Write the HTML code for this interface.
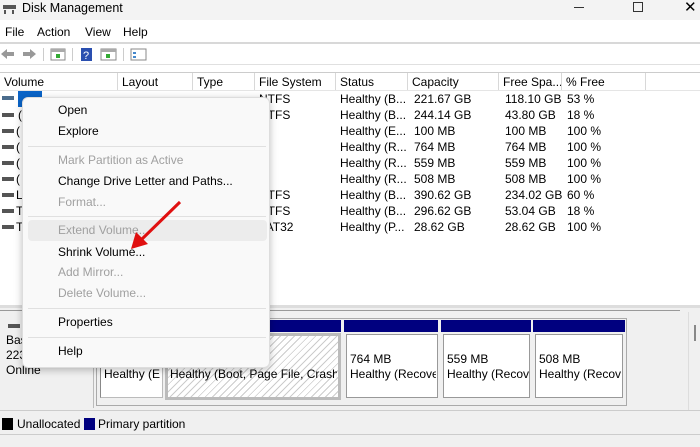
<!DOCTYPE html>
<html><head><style>
*{margin:0;padding:0;box-sizing:border-box}
body{width:700px;height:447px;overflow:hidden;background:#f0f0f0;font-family:"Liberation Sans",sans-serif;font-size:12px;color:#000;position:relative}
.a{position:absolute;white-space:nowrap}
.row{position:absolute;left:0;width:700px;height:16px}
.row span{position:absolute;top:1px;white-space:nowrap}
.mi{position:absolute;left:58px;font-size:12px}
.dis{color:#a0a0a0}
.sep{position:absolute;left:28px;width:238px;height:1px;background:#e0e0e0}
.hd{position:absolute;top:73px;height:18px;border-right:1px solid #d8d8d8;padding:2px 4px;font-size:12px;white-space:nowrap;overflow:hidden}
</style></head><body>
<div class="a" style="left:0;top:0;width:700px;height:20px;background:#f3f3f3"></div>
<svg class="a" style="left:3px;top:3px" width="14" height="12"><rect x="0" y="2" width="13" height="4" fill="#555"/><rect x="1" y="7" width="2" height="4" fill="#555"/><rect x="9" y="7" width="2" height="4" fill="#555"/></svg>
<div class="a" style="left:22px;top:1px;font-size:12.5px">Disk Management</div>
<div class="a" style="left:574px;top:7px;width:10px;height:1px;background:#333"></div>
<div class="a" style="left:633px;top:2px;width:10px;height:10px;border:1px solid #333"></div>
<div class="a" style="left:684px;top:-2px;font-size:15px">✕</div>
<div class="a" style="left:0;top:20px;width:700px;height:22px;background:#fff"></div>
<div class="a" style="left:5px;top:25px">File</div>
<div class="a" style="left:37px;top:25px">Action</div>
<div class="a" style="left:85px;top:25px">View</div>
<div class="a" style="left:123px;top:25px">Help</div>
<div class="a" style="left:0;top:42px;width:700px;height:2px;background:#d8d8d8"></div>
<div class="a" style="left:0;top:44px;width:700px;height:20px;background:#fff"></div>
<svg class="a" style="left:0;top:46px" width="160" height="16">
<path d="M1 8 L7 3 V6 H14 V10 H7 V13 Z" fill="#999"/><path d="M36 8 L30 3 V6 H23 V10 H30 V13 Z" fill="#999"/>
<rect x="43" y="2" width="1" height="13" fill="#ccc"/>
<rect x="51" y="3" width="14" height="11" fill="#fff" stroke="#888"/><rect x="51" y="3" width="14" height="3" fill="#aaa"/><rect x="56" y="8" width="4" height="4" fill="#3a3"/>
<rect x="72" y="2" width="1" height="13" fill="#ccc"/>
<rect x="81" y="2" width="11" height="13" fill="#2a4fb0"/><text x="83" y="13" font-size="11" fill="#fff" font-family="Liberation Sans">?</text>
<rect x="101" y="3" width="15" height="11" fill="#fff" stroke="#888"/><rect x="101" y="3" width="15" height="3" fill="#aaa"/><rect x="106" y="8" width="4" height="4" fill="#3a3"/>
<rect x="123" y="2" width="1" height="13" fill="#ccc"/>
<rect x="131" y="3" width="15" height="11" fill="#fff" stroke="#888"/><rect x="133" y="6" width="3" height="2" fill="#48c"/><rect x="133" y="10" width="3" height="2" fill="#48c"/>
</svg>
<div class="a" style="left:0;top:64px;width:700px;height:1px;background:#e0e0e0"></div>
<div class="a" style="left:0;top:65px;width:700px;height:240px;background:#fff"></div>
<div class="a" style="left:0;top:72px;width:700px;height:1px;background:#ccc"></div>
<div class="hd" style="left:0;width:118px">Volume</div>
<div class="hd" style="left:118px;width:75px">Layout</div>
<div class="hd" style="left:193px;width:62px">Type</div>
<div class="hd" style="left:255px;width:81px">File System</div>
<div class="hd" style="left:336px;width:72px">Status</div>
<div class="hd" style="left:408px;width:91px">Capacity</div>
<div class="hd" style="left:499px;width:63px">Free Spa...</div>
<div class="hd" style="left:562px;width:84px">% Free</div>
<div class="a" style="left:0;top:90px;width:700px;height:1px;background:#e5e5e5"></div>

<div class="row" style="top:91px"><span style="left:2px;top:5px;width:12px;height:4px;background:#4b6c8c"></span><span style="left:18px;top:0;width:24px;height:16px;background:#0a64c8"></span><span style="left:259px">NTFS</span><span style="left:340px">Healthy (B...</span><span style="left:414px">221.67 GB</span><span style="left:505px">118.10 GB</span><span style="left:567px">53 %</span></div>
<div class="row" style="top:107px"><span style="left:2px;top:6px;width:12px;height:4px;background:#555"></span><span style="left:18px">(</span><span style="left:259px">NTFS</span><span style="left:340px">Healthy (B...</span><span style="left:414px">244.14 GB</span><span style="left:505px">43.80 GB</span><span style="left:567px">18 %</span></div>
<div class="row" style="top:123px"><span style="left:2px;top:6px;width:12px;height:4px;background:#555"></span><span style="left:16px">(</span><span style="left:340px">Healthy (E...</span><span style="left:414px">100 MB</span><span style="left:505px">100 MB</span><span style="left:567px">100 %</span></div>
<div class="row" style="top:139px"><span style="left:2px;top:6px;width:12px;height:4px;background:#555"></span><span style="left:16px">(</span><span style="left:340px">Healthy (R...</span><span style="left:414px">764 MB</span><span style="left:505px">764 MB</span><span style="left:567px">100 %</span></div>
<div class="row" style="top:155px"><span style="left:2px;top:6px;width:12px;height:4px;background:#555"></span><span style="left:16px">(</span><span style="left:340px">Healthy (R...</span><span style="left:414px">559 MB</span><span style="left:505px">559 MB</span><span style="left:567px">100 %</span></div>
<div class="row" style="top:171px"><span style="left:2px;top:6px;width:12px;height:4px;background:#555"></span><span style="left:16px">(</span><span style="left:340px">Healthy (R...</span><span style="left:414px">508 MB</span><span style="left:505px">508 MB</span><span style="left:567px">100 %</span></div>
<div class="row" style="top:187px"><span style="left:2px;top:6px;width:12px;height:4px;background:#555"></span><span style="left:16px">L</span><span style="left:259px">NTFS</span><span style="left:340px">Healthy (B...</span><span style="left:414px">390.62 GB</span><span style="left:505px">234.02 GB</span><span style="left:567px">60 %</span></div>
<div class="row" style="top:203px"><span style="left:2px;top:6px;width:12px;height:4px;background:#555"></span><span style="left:16px">T</span><span style="left:259px">NTFS</span><span style="left:340px">Healthy (B...</span><span style="left:414px">296.62 GB</span><span style="left:505px">53.04 GB</span><span style="left:567px">18 %</span></div>
<div class="row" style="top:219px"><span style="left:2px;top:6px;width:12px;height:4px;background:#555"></span><span style="left:16px">T</span><span style="left:259px">FAT32</span><span style="left:340px">Healthy (P...</span><span style="left:414px">28.62 GB</span><span style="left:505px">28.62 GB</span><span style="left:567px">100 %</span></div>

<div class="a" style="left:0;top:305px;width:700px;height:3px;background:#ddd"></div>
<div class="a" style="left:0;top:310px;width:700px;height:100px;background:#f0f0f0"></div>
<div class="a" style="left:0;top:310px;width:680px;height:1px;background:#999"></div>
<div class="a" style="left:8px;top:324px;width:12px;height:4px;background:#555"></div>
<div class="a" style="left:6px;top:333px;line-height:15px">Bas<br>223<br>Online</div>
<div class="a" style="left:93px;top:312px;width:1px;height:96px;background:#bbb"></div>
<div class="a" style="left:96px;top:318px;width:531px;height:88px;border:1px solid #aaa;background:#f0f0f0"></div>
<div class="a" style="left:99px;top:320px;width:67px;height:12px;background:#00007f"></div>
<div class="a" style="left:166px;top:320px;width:175px;height:12px;background:#00007f"></div>
<div class="a" style="left:165px;top:333px;width:176px;height:67px;border:3px solid #bbb;background:repeating-linear-gradient(135deg,#fff 0 4px,#ccc 4px 5px)"></div>
<div class="a" style="left:100px;top:334px;width:63px;height:64px;border:1px solid #bbb;border-top-color:#888;border-left-color:#888;background:#fff"></div>
<div class="a" style="left:104px;top:367px">Healthy (E</div>
<div class="a" style="left:170px;top:367px;width:167px;overflow:hidden">Healthy (Boot, Page File, Crash Dump</div>
<div class="a" style="left:344px;top:320px;width:94px;height:12px;background:#00007f"></div>
<div class="a" style="left:441px;top:320px;width:90px;height:12px;background:#00007f"></div>
<div class="a" style="left:533px;top:320px;width:92px;height:12px;background:#00007f"></div>
<div class="a" style="left:346px;top:334px;width:92px;height:64px;border:1px solid #999;background:#fff"></div>
<div class="a" style="left:443px;top:334px;width:87px;height:64px;border:1px solid #999;background:#fff"></div>
<div class="a" style="left:535px;top:334px;width:88px;height:64px;border:1px solid #999;background:#fff"></div>
<div class="a" style="left:350px;top:352px;line-height:15px;width:86px;overflow:hidden">764 MB<br>Healthy (Recove</div>
<div class="a" style="left:447px;top:352px;line-height:15px;width:82px;overflow:hidden">559 MB<br>Healthy (Recove</div>
<div class="a" style="left:539px;top:352px;line-height:15px;width:82px;overflow:hidden">508 MB<br>Healthy (Recove</div>
<div class="a" style="left:688px;top:312px;width:1px;height:98px;background:#ddd"></div>
<div class="a" style="left:694px;top:325px;width:2px;height:16px;background:#888"></div>
<div class="a" style="left:0;top:410px;width:700px;height:1px;background:#ccc"></div>
<div class="a" style="left:2px;top:418px;width:11px;height:12px;background:#000"></div>
<div class="a" style="left:17px;top:417px">Unallocated</div>
<div class="a" style="left:84px;top:418px;width:11px;height:12px;background:#00007f"></div>
<div class="a" style="left:98px;top:417px">Primary partition</div>
<div class="a" style="left:0;top:434px;width:700px;height:1px;background:#ccc"></div>

<div class="a" style="left:22px;top:97px;width:248px;height:271px;background:#f9f9f9;border:1px solid #ddd;border-radius:6px;box-shadow:0 2px 8px rgba(0,0,0,.25)"></div>
<div class="mi" style="top:103px">Open</div>
<div class="mi" style="top:124px">Explore</div>
<div class="sep" style="top:146px"></div>
<div class="mi dis" style="top:153px">Mark Partition as Active</div>
<div class="mi" style="top:174px">Change Drive Letter and Paths...</div>
<div class="mi dis" style="top:195px">Format...</div>
<div class="sep" style="top:216px"></div>
<div class="a" style="left:28px;top:220px;width:239px;height:21px;background:#ececec;border-radius:4px"></div>
<div class="mi dis" style="top:223px">Extend Volume...</div>
<div class="mi" style="top:245px">Shrink Volume...</div>
<div class="mi dis" style="top:265px">Add Mirror...</div>
<div class="mi dis" style="top:286px">Delete Volume...</div>
<div class="sep" style="top:308px"></div>
<div class="mi" style="top:315px">Properties</div>
<div class="sep" style="top:337px"></div>
<div class="mi" style="top:344px">Help</div>
<svg class="a" style="left:0;top:0" width="700" height="447"><line x1="180" y1="202" x2="141" y2="240" stroke="#e01010" stroke-width="3"/><path d="M131 249 L136 232 L148 244 Z" fill="#e01010"/></svg>
</body></html>
